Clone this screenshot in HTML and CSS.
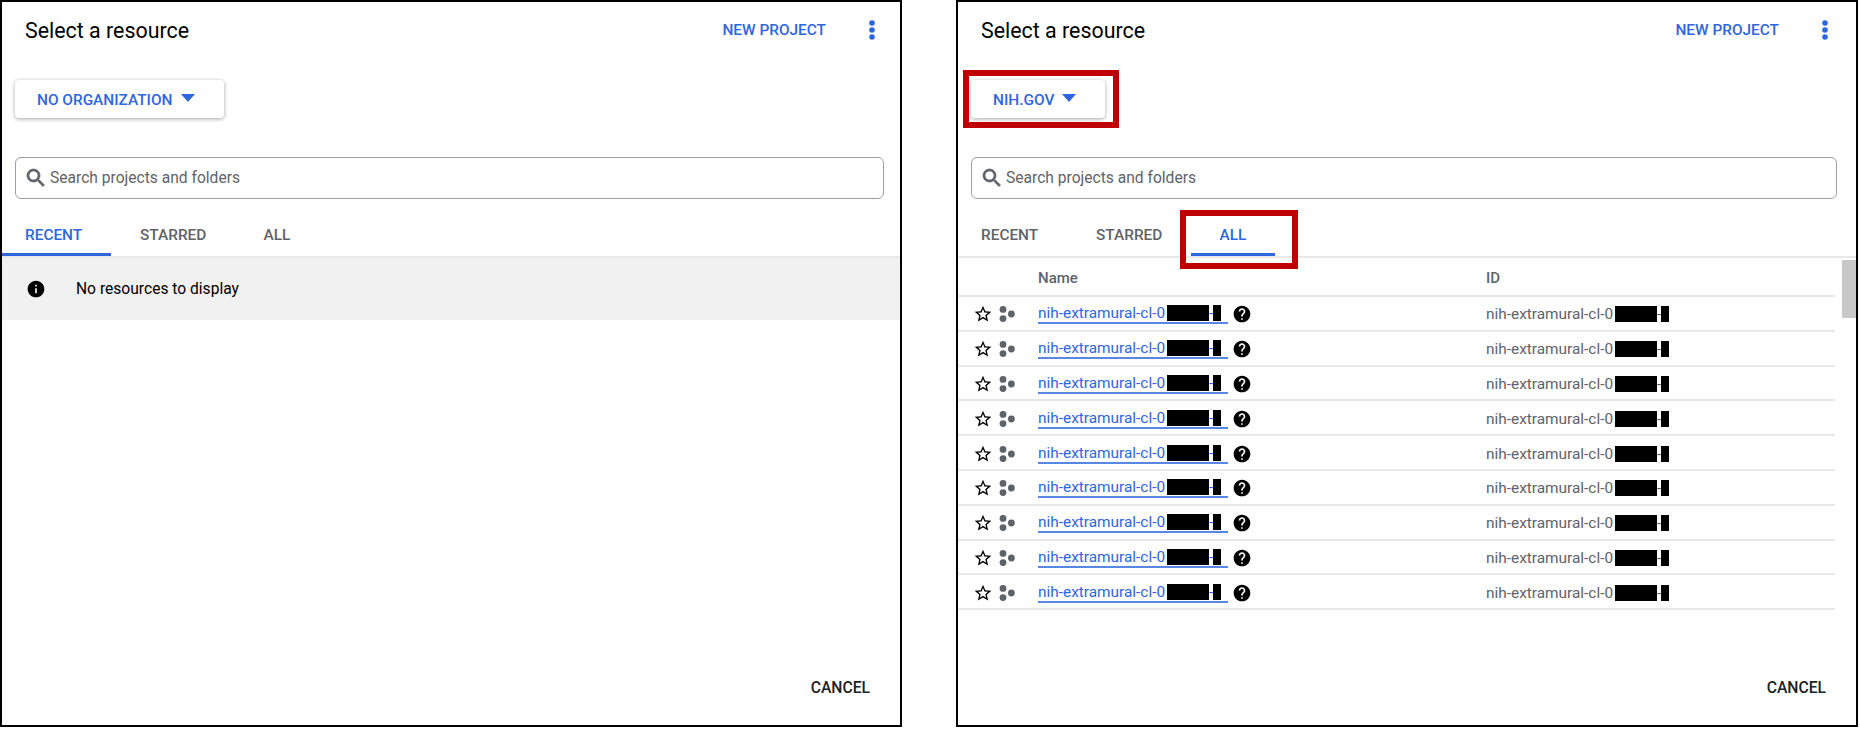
FILE: index.html
```html
<!DOCTYPE html>
<html lang="en">
<head>
  <meta charset="UTF-8">
  <title>Select a resource</title>
  <link rel="stylesheet" href="styles.css">
</head>
<body>
<svg class="defs" width="0" height="0">
  <symbol id="i-search" viewBox="0 0 24 24"><path d="M15.5 14h-.79l-.28-.27C15.41 12.59 16 11.11 16 9.5 16 5.91 13.09 3 9.5 3S3 5.91 3 9.5 5.91 16 9.5 16c1.61 0 3.09-.59 4.23-1.57l.27.28v.79l5 4.99L20.49 19l-4.99-5zm-6 0C7.01 14 5 11.99 5 9.5S7.01 5 9.5 5 14 7.01 14 9.5 11.99 14 9.5 14z" stroke-width="0.7"/></symbol>
  <symbol id="i-info" viewBox="0 0 24 24"><path d="M12 2C6.48 2 2 6.48 2 12s4.48 10 10 10 10-4.48 10-10S17.52 2 12 2zm1 15h-2v-6h2v6zm0-8h-2V7h2v2z"/></symbol>
  <symbol id="i-help" viewBox="0 0 24 24"><path d="M12 2C6.48 2 2 6.48 2 12s4.48 10 10 10 10-4.48 10-10S17.52 2 12 2zm1 17h-2v-2h2v2zm2.07-7.75l-.9.92C13.45 12.9 13 13.5 13 15h-2v-.5c0-1.1.45-2.1 1.17-2.83l1.24-1.26c.37-.36.59-.86.59-1.41 0-1.1-.9-2-2-2s-2 .9-2 2H8c0-2.21 1.79-4 4-4s4 1.79 4 4c0 .88-.36 1.68-.93 2.25z"/></symbol>
  <symbol id="i-star" viewBox="0 0 24 24"><path d="M22 9.24l-7.19-.62L12 2 9.19 8.63 2 9.24l5.46 4.73L5.82 21 12 17.27 18.18 21l-1.63-7.03L22 9.24zM12 15.4l-3.76 2.27 1-4.28-3.32-2.88 4.38-.38L12 6.1l1.71 4.04 4.38.38-3.32 2.88 1 4.28L12 15.4z"/></symbol>
  <symbol id="i-project" viewBox="0 0 16 16"><circle cx="4" cy="3.4" r="3.4"/><circle cx="4" cy="12.6" r="3.4"/><circle cx="12.4" cy="8" r="3.4"/></symbol>
  <symbol id="i-more" viewBox="0 0 8 20"><circle cx="4" cy="3" r="2.8"/><circle cx="4" cy="10" r="2.8"/><circle cx="4" cy="17" r="2.8"/></symbol>
</svg>

<div class="panel panel-recent">
  <div class="head">
    <h2 class="title">Select a resource</h2>
    <a class="new-project">NEW PROJECT</a>
    <svg class="more"><use href="#i-more"/></svg>
  </div>
  <div class="org-row">
    <button class="org-btn">NO ORGANIZATION<span class="caret"></span></button>
  </div>
  <div class="search">
    <svg class="search-icon"><use href="#i-search"/></svg>
    <span>Search projects and folders</span>
  </div>
  <div class="tabs">
    <div class="tab tab-recent active">RECENT</div>
    <div class="tab tab-starred">STARRED</div>
    <div class="tab tab-all">ALL</div>
  </div>
  <div class="empty">
    <svg class="info-icon"><use href="#i-info"/></svg>
    <span>No resources to display</span>
  </div>
  <div class="foot"><a class="cancel">CANCEL</a></div>
</div>

<div class="panel panel-all">
  <div class="head">
    <h2 class="title">Select a resource</h2>
    <a class="new-project">NEW PROJECT</a>
    <svg class="more"><use href="#i-more"/></svg>
  </div>
  <div class="org-row">
    <button class="org-btn">NIH.GOV<span class="caret"></span><span class="callout callout-org"></span></button>
  </div>
  <div class="search">
    <svg class="search-icon"><use href="#i-search"/></svg>
    <span>Search projects and folders</span>
  </div>
  <div class="tabs">
    <div class="tab tab-recent">RECENT</div>
    <div class="tab tab-starred">STARRED</div>
    <div class="tab tab-all active">ALL<span class="callout callout-tab"></span></div>
  </div>
  <div class="list">
    <div class="scrollbar"><div class="scroll-thumb"></div></div>
    <div class="row row-head"><span></span><span>Name</span><span>ID</span></div>
    <div class="row">
      <span class="row-icons"><svg class="star"><use href="#i-star"/></svg><svg class="project"><use href="#i-project"/></svg></span>
      <span class="name"><a class="link">nih-extramural-cl-0<i class="bar bar-a"></i>-<i class="bar bar-b"></i></a><svg class="help"><use href="#i-help"/></svg></span>
      <span class="pid">nih-extramural-cl-0<i class="bar bar-a"></i>-<i class="bar bar-b"></i></span>
    </div>
    <div class="row">
      <span class="row-icons"><svg class="star"><use href="#i-star"/></svg><svg class="project"><use href="#i-project"/></svg></span>
      <span class="name"><a class="link">nih-extramural-cl-0<i class="bar bar-a"></i>-<i class="bar bar-b"></i></a><svg class="help"><use href="#i-help"/></svg></span>
      <span class="pid">nih-extramural-cl-0<i class="bar bar-a"></i>-<i class="bar bar-b"></i></span>
    </div>
    <div class="row">
      <span class="row-icons"><svg class="star"><use href="#i-star"/></svg><svg class="project"><use href="#i-project"/></svg></span>
      <span class="name"><a class="link">nih-extramural-cl-0<i class="bar bar-a"></i>-<i class="bar bar-b"></i></a><svg class="help"><use href="#i-help"/></svg></span>
      <span class="pid">nih-extramural-cl-0<i class="bar bar-a"></i>-<i class="bar bar-b"></i></span>
    </div>
    <div class="row">
      <span class="row-icons"><svg class="star"><use href="#i-star"/></svg><svg class="project"><use href="#i-project"/></svg></span>
      <span class="name"><a class="link">nih-extramural-cl-0<i class="bar bar-a"></i>-<i class="bar bar-b"></i></a><svg class="help"><use href="#i-help"/></svg></span>
      <span class="pid">nih-extramural-cl-0<i class="bar bar-a"></i>-<i class="bar bar-b"></i></span>
    </div>
    <div class="row">
      <span class="row-icons"><svg class="star"><use href="#i-star"/></svg><svg class="project"><use href="#i-project"/></svg></span>
      <span class="name"><a class="link">nih-extramural-cl-0<i class="bar bar-a"></i>-<i class="bar bar-b"></i></a><svg class="help"><use href="#i-help"/></svg></span>
      <span class="pid">nih-extramural-cl-0<i class="bar bar-a"></i>-<i class="bar bar-b"></i></span>
    </div>
    <div class="row">
      <span class="row-icons"><svg class="star"><use href="#i-star"/></svg><svg class="project"><use href="#i-project"/></svg></span>
      <span class="name"><a class="link">nih-extramural-cl-0<i class="bar bar-a"></i>-<i class="bar bar-b"></i></a><svg class="help"><use href="#i-help"/></svg></span>
      <span class="pid">nih-extramural-cl-0<i class="bar bar-a"></i>-<i class="bar bar-b"></i></span>
    </div>
    <div class="row">
      <span class="row-icons"><svg class="star"><use href="#i-star"/></svg><svg class="project"><use href="#i-project"/></svg></span>
      <span class="name"><a class="link">nih-extramural-cl-0<i class="bar bar-a"></i>-<i class="bar bar-b"></i></a><svg class="help"><use href="#i-help"/></svg></span>
      <span class="pid">nih-extramural-cl-0<i class="bar bar-a"></i>-<i class="bar bar-b"></i></span>
    </div>
    <div class="row">
      <span class="row-icons"><svg class="star"><use href="#i-star"/></svg><svg class="project"><use href="#i-project"/></svg></span>
      <span class="name"><a class="link">nih-extramural-cl-0<i class="bar bar-a"></i>-<i class="bar bar-b"></i></a><svg class="help"><use href="#i-help"/></svg></span>
      <span class="pid">nih-extramural-cl-0<i class="bar bar-a"></i>-<i class="bar bar-b"></i></span>
    </div>
    <div class="row">
      <span class="row-icons"><svg class="star"><use href="#i-star"/></svg><svg class="project"><use href="#i-project"/></svg></span>
      <span class="name"><a class="link">nih-extramural-cl-0<i class="bar bar-a"></i>-<i class="bar bar-b"></i></a><svg class="help"><use href="#i-help"/></svg></span>
      <span class="pid">nih-extramural-cl-0<i class="bar bar-a"></i>-<i class="bar bar-b"></i></span>
    </div>
  </div>
  <div class="foot"><a class="cancel">CANCEL</a></div>
</div>
</body>
</html>
```

FILE: styles.css
```css
body {
  margin: 0;
  height: 729px;
  overflow: hidden;
  display: flex;
  gap: 54px;
  background-color: #ffffff;
  font-family: 'Roboto', 'Liberation Sans', sans-serif;
  color: #000000;
}

.defs {
  position: absolute;
}

.panel {
  box-sizing: border-box;
  width: 902px;
  height: 727px;
  border: 2px solid #000000;
  display: flex;
  flex-direction: column;
}

.head {
  display: flex;
  align-items: center;
  height: 56px;
  padding: 0 24px 0 23px;
}

.panel-all .head {
  padding-right: 27px;
}

.title {
  margin: 0;
  padding-top: 1px;
  font-size: 21.4px;
  font-weight: 400;
  flex: 1;
}

.new-project {
  color: #2f66dd;
  font-size: 15.4px;
  font-weight: 500;
  margin-right: 42px;
}

.more {
  width: 8px;
  height: 20px;
  fill: #2f66dd;
}

.org-row {
  padding: 22px 0 0 13px;
  height: 38px;
}

.org-btn {
  position: relative;
  display: inline-flex;
  align-items: center;
  height: 38px;
  padding: 2px 29px 0 22px;
  border: none;
  border-radius: 4px;
  background-color: #ffffff;
  box-shadow: 0 1px 4px rgba(0, 0, 0, 0.35);
  color: #2f66dd;
  font-family: inherit;
  font-size: 15.4px;
  font-weight: 500;
}

.caret {
  width: 0;
  height: 0;
  margin: -4px 0 0 8px;
  border-left: 7px solid transparent;
  border-right: 7px solid transparent;
  border-top: 8px solid #2f66dd;
}

/* red annotation boxes drawn over the screenshot */
.callout {
  position: absolute;
  box-sizing: border-box;
  border: 6px solid #c00000;
}

.callout-org {
  left: -8px;
  right: -14px;
  top: -10px;
  bottom: -10px;
}

.callout-tab {
  left: -11px;
  right: -23px;
  top: 11px;
  bottom: -16px;
}

.search {
  box-sizing: border-box;
  display: flex;
  align-items: center;
  width: 869px;
  height: 42px;
  margin: 39px 0 0 13px;
  padding-left: 8px;
  border: 1.5px solid #9aa0a6;
  border-radius: 6px;
  color: #5f6368;
  font-size: 15.6px;
}

.panel-all .search {
  width: 866px;
}

.search-icon {
  width: 24px;
  height: 24px;
  margin-right: 2px;
  fill: #5f6368;
  stroke: #5f6368;
}

.tabs {
  display: flex;
  height: 57px;
  border-bottom: 2px solid #e8e8e8;
}

.tab {
  position: relative;
  box-sizing: border-box;
  height: 57px;
  padding-top: 27px;
  color: #5f6368;
  font-size: 15.4px;
  font-weight: 500;
}

.tab-recent {
  width: 109px;
  padding-left: 23px;
}

.tab-starred {
  width: 124px;
  padding-left: 29px;
}

.tab-all {
  width: 84px;
  text-align: center;
}

.tab.active {
  color: #2f66dd;
  border-bottom: 3px solid #2f66dd;
}

.empty {
  display: flex;
  align-items: center;
  height: 62px;
  padding-left: 24px;
  background-color: #f1f1f1;
  font-size: 15.6px;
}

.info-icon {
  width: 20px;
  height: 20px;
  margin-right: 30px;
}

.list {
  position: relative;
  width: 877px;
  font-size: 15.4px;
  color: #5f6368;
}

.scrollbar {
  position: absolute;
  top: 0;
  left: 884px;
  width: 14px;
  height: 468px;
}

.scroll-thumb {
  width: 14px;
  height: 58px;
  margin-top: 2px;
  background-color: #c8c8c8;
}

.row {
  box-sizing: border-box;
  display: grid;
  grid-template-columns: 80px 448px 1fr;
  align-items: center;
  height: 34.8px;
  padding-top: 2px;
  border-bottom: 2px solid #e8e8e8;
}

.row-head {
  height: 39px;
  padding-top: 3px;
  font-size: 15px;
  font-weight: 500;
}

.row-icons {
  display: flex;
  align-items: center;
  padding-left: 15px;
}

.star {
  width: 20px;
  height: 20px;
  margin-right: 6px;
}

.project {
  width: 16px;
  height: 16px;
  fill: #5f6368;
}

.name {
  display: flex;
  align-items: center;
}

.link {
  display: inline-flex;
  align-items: center;
  width: 190px;
  border-bottom: 2px solid #5a86e4;
  color: #2f66dd;
}

.help {
  width: 20px;
  height: 20px;
  margin-left: 4px;
}

.pid {
  display: inline-flex;
  align-items: center;
}

.bar {
  display: inline-block;
  height: 16px;
  background-color: #000000;
}

.bar-a {
  width: 42px;
  margin-left: 2px;
}

.bar-b {
  width: 8px;
}

.foot {
  margin-top: auto;
  display: flex;
  justify-content: flex-end;
  padding: 0 30px 28px 0;
}

.cancel {
  color: #202124;
  font-size: 15.7px;
  font-weight: 500;
}
```
